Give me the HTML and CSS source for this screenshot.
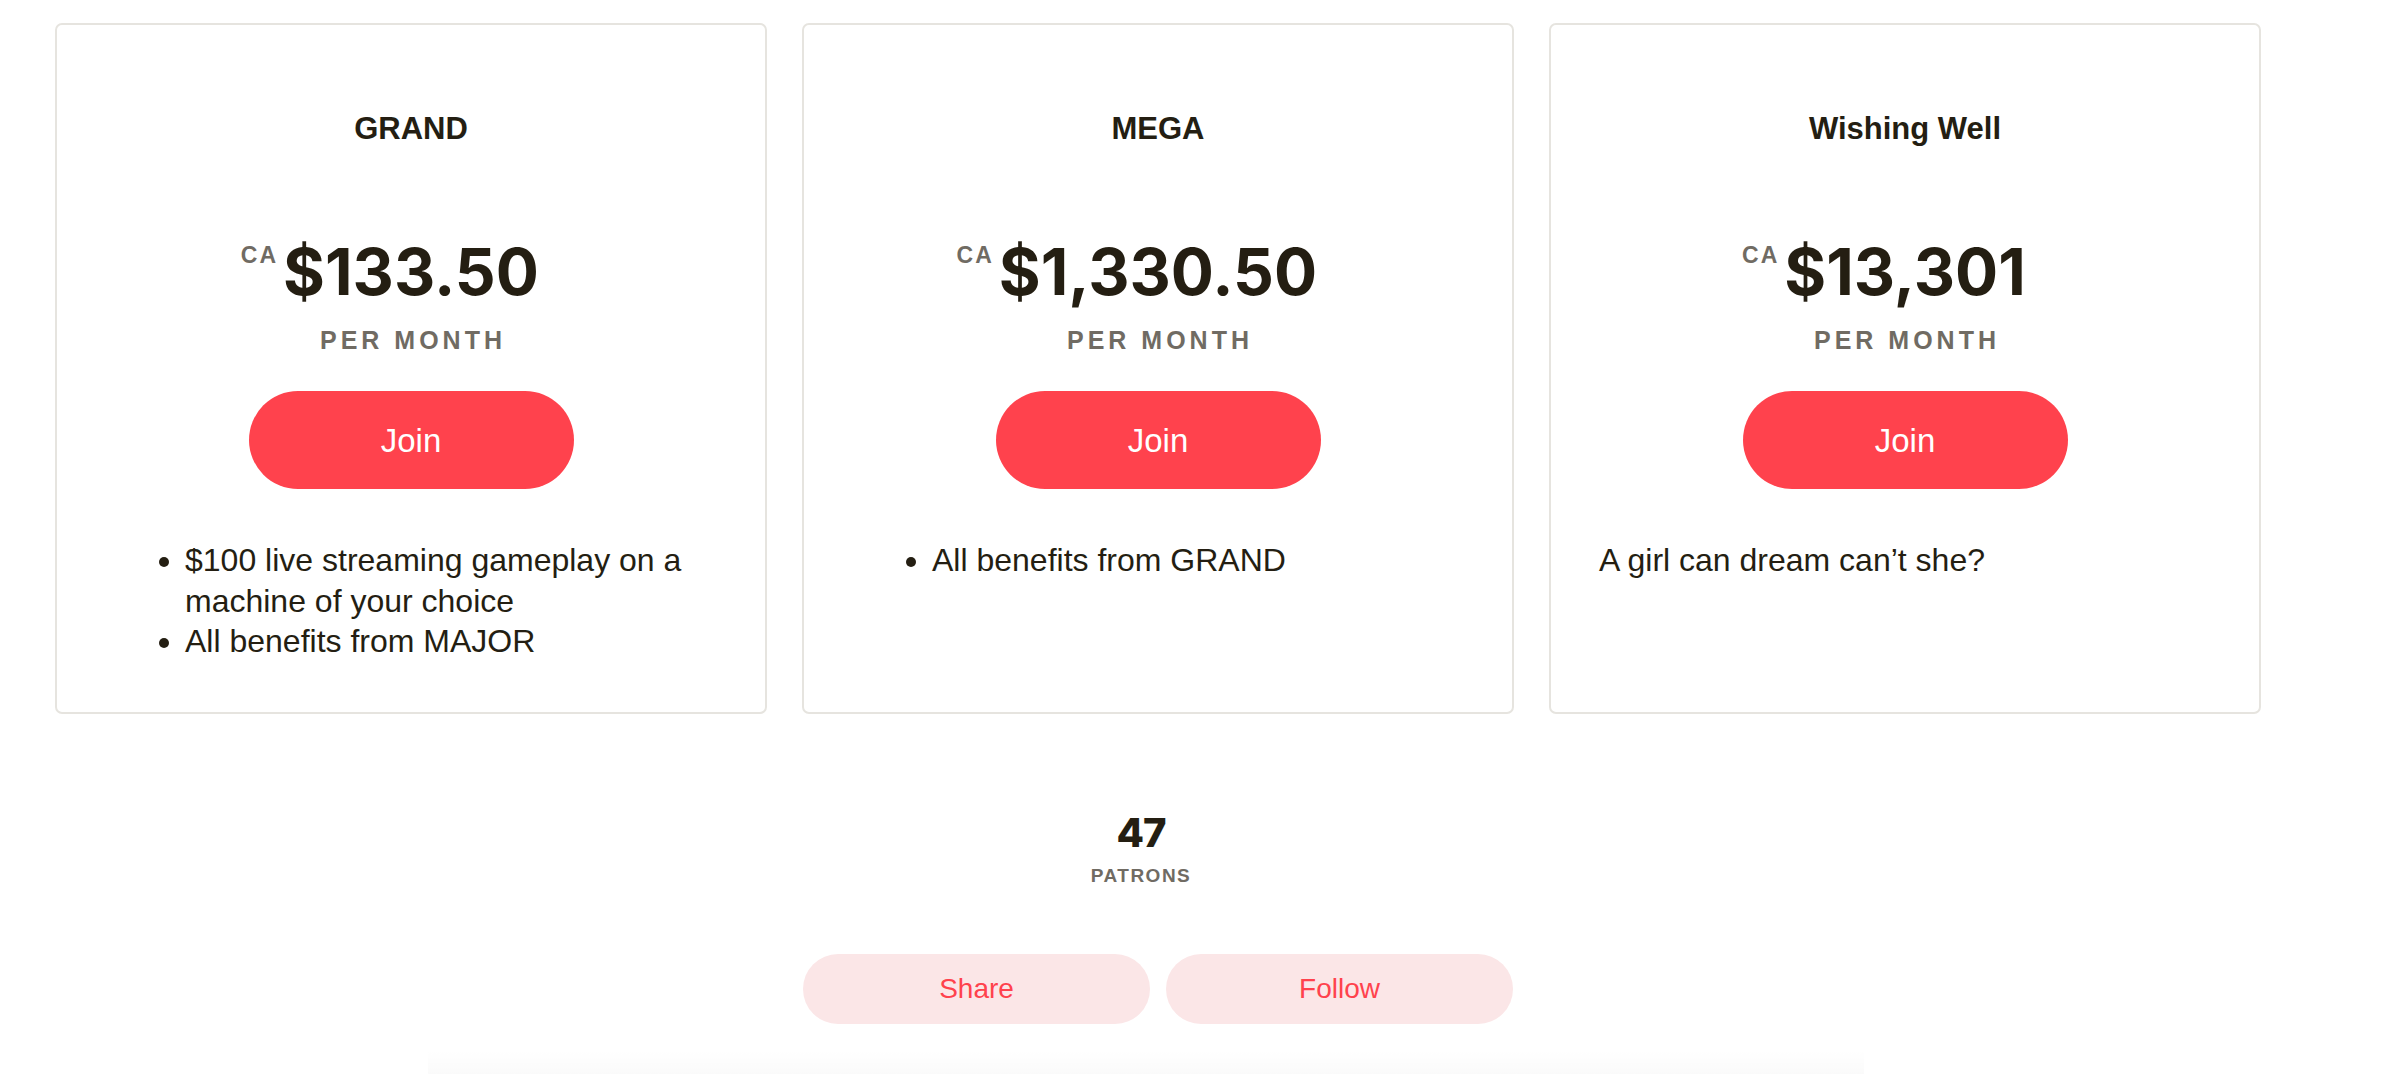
FILE: index.html
```html
<!DOCTYPE html>
<html lang="en">
<head>
<meta charset="utf-8">
<title>Tiers</title>
<link rel="stylesheet" href="styles.css">
</head>
<body>
<main class="page">
  <section class="tiers">
    <article class="tier">
      <h3 class="tier-title">GRAND</h3>
      <div class="price"><span class="amount"><span class="cur">CA</span>$133.50</span></div>
      <div class="period">PER MONTH</div>
      <button class="join">Join</button>
      <ul class="benefits">
        <li>$100 live streaming gameplay on a machine of your choice</li>
        <li>All benefits from MAJOR</li>
      </ul>
    </article>
    <article class="tier">
      <h3 class="tier-title">MEGA</h3>
      <div class="price"><span class="amount"><span class="cur">CA</span>$1,330.50</span></div>
      <div class="period">PER MONTH</div>
      <button class="join">Join</button>
      <ul class="benefits">
        <li>All benefits from GRAND</li>
      </ul>
    </article>
    <article class="tier">
      <h3 class="tier-title">Wishing Well</h3>
      <div class="price"><span class="amount"><span class="cur">CA</span>$13,301</span></div>
      <div class="period">PER MONTH</div>
      <button class="join">Join</button>
      <p class="desc">A girl can dream can’t she?</p>
    </article>
  </section>

  <section class="stats">
    <div class="count">47</div>
    <div class="label">PATRONS</div>
  </section>

  <div class="actions">
    <button class="soft">Share</button>
    <button class="soft">Follow</button>
  </div>

  <div class="next-fade"></div>
</main>
</body>
</html>
```

FILE: styles.css
```css
html, body {
  margin: 0;
  padding: 0;
  background: #ffffff;
}

body {
  font-family: "Liberation Sans", Arial, sans-serif;
  color: #241e12;
  overflow: hidden;
}

.page {
  width: 2206px;
  padding: 23px 0 0 55px;
}

.tiers {
  display: grid;
  grid-template-columns: repeat(3, 712px);
  column-gap: 35px;
}

.tier {
  box-sizing: border-box;
  border: 2px solid #e6e4df;
  border-radius: 7px;
  padding: 85px 48px 50px;
  display: flex;
  flex-direction: column;
  align-items: stretch;
}

.tier-title {
  margin: 0;
  font-size: 31px;
  line-height: 37px;
  font-weight: 700;
  text-align: center;
  color: #241e12;
}

.price {
  margin-top: 89px;
  display: flex;
  justify-content: center;
}

.amount {
  position: relative;
  display: block;
  font-family: Inter, "Liberation Sans", sans-serif;
  font-weight: 700;
  font-size: 64px;
  line-height: 72px;
  color: #241e12;
}

.cur {
  position: absolute;
  right: calc(100% + 5px);
  top: 8px;
  font-family: "Liberation Sans", Arial, sans-serif;
  font-size: 23px;
  line-height: 22px;
  font-weight: 700;
  letter-spacing: 2px;
  color: #706b63;
}

.period {
  margin-top: 17px;
  font-size: 25px;
  line-height: 30px;
  font-weight: 700;
  letter-spacing: 4px;
  padding-left: 4px;
  text-align: center;
  color: #706b63;
}

.join {
  align-self: center;
  margin-top: 36px;
  width: 325px;
  height: 98px;
  border: 0;
  border-radius: 49px;
  background: #ff424d;
  color: #ffffff;
  font-family: "Liberation Sans", Arial, sans-serif;
  font-size: 33px;
  padding: 2px 0 0;
  cursor: pointer;
}

.benefits {
  margin: 51px 0 0;
  padding-left: 80px;
  font-size: 32px;
  line-height: 40.5px;
  color: #241e12;
}

.desc {
  margin: 51px 0 0;
  font-size: 32px;
  line-height: 40.5px;
  color: #241e12;
}

.stats {
  margin-top: 95px;
  padding-right: 34px;
  text-align: center;
}

.count {
  font-family: Inter, "Liberation Sans", sans-serif;
  font-weight: 800;
  font-size: 40px;
  line-height: 48px;
  letter-spacing: -1px;
  color: #241e12;
}

.label {
  margin-top: 7px;
  font-size: 19px;
  line-height: 24px;
  font-weight: 700;
  letter-spacing: 1.5px;
  color: #706b63;
}

.actions {
  margin-top: 66px;
  display: flex;
  justify-content: center;
  gap: 16px;
}

.soft {
  width: 347px;
  height: 70px;
  border: 0;
  border-radius: 35px;
  background: #fbe6e7;
  color: #ff424d;
  font-family: "Liberation Sans", Arial, sans-serif;
  font-size: 28px;
  padding: 0;
  cursor: pointer;
}

.next-fade {
  margin: 26px 0 0 373px;
  width: 1436px;
  height: 30px;
  background: linear-gradient(to bottom, rgba(0, 0, 0, 0), rgba(0, 0, 0, 0.025));
}
```
